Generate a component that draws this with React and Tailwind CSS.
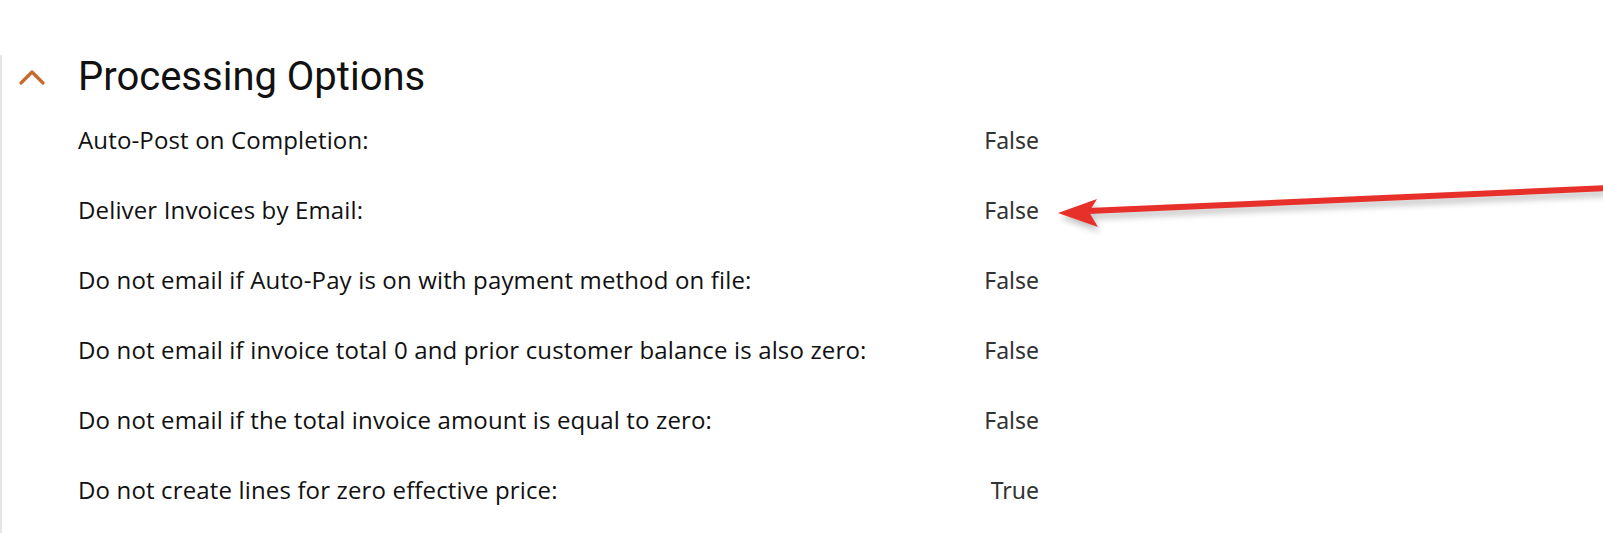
import React from 'react';

const rows = [
  { label: 'Auto-Post on Completion:', value: 'False' },
  { label: 'Deliver Invoices by Email:', value: 'False' },
  { label: 'Do not email if Auto-Pay is on with payment method on file:', value: 'False' },
  { label: 'Do not email if invoice total 0 and prior customer balance is also zero:', value: 'False' },
  { label: 'Do not email if the total invoice amount is equal to zero:', value: 'False' },
  { label: 'Do not create lines for zero effective price:', value: 'True' },
];

export default function App() {
  return (
    <div className="relative h-[533px] w-[1603px] overflow-hidden bg-white">
      <div className="h-full border-l-2 border-[#e6e6e6]">
        <div className="flex h-[44px] items-center pt-0 mt-[55px]">
          <svg width="28" height="18" viewBox="0 0 28 18" className="ml-[16px]">
            <path d="M3 15 L14 4 L25 15" fill="none" stroke="#c96a2b" strokeWidth="3.2" strokeLinecap="round" strokeLinejoin="round" />
          </svg>
          <h2 className="ml-[32px] text-[40px] leading-[44px] text-[#111] font-['Roboto',sans-serif]">
            Processing Options
          </h2>
        </div>
        <div className="mt-[6px] ml-[76px] w-[961px]">
          {rows.map(r => (
            <div key={r.label} className="flex h-[70px] items-center justify-between">
              <span className="text-[24px] font-medium tracking-[0.15px] text-[#111] font-['Open_Sans',sans-serif]">{r.label}</span>
              <span className="text-[23px] text-[#333] font-['Noto_Sans',sans-serif]">{r.value}</span>
            </div>
          ))}
        </div>
      </div>
      <svg className="absolute left-0 top-0 pointer-events-none" width="1603" height="533">
        <defs>
          <filter id="sh" x="-10%" y="-200%" width="120%" height="500%">
            <feGaussianBlur stdDeviation="3" />
          </filter>
        </defs>
        <g opacity="0.35" filter="url(#sh)" transform="translate(2,5)">
          <path d="M1610 188 L1088 211" stroke="#555" strokeWidth="6" fill="none" />
          <path d="M1058 213 L1097 199 L1089 212 L1098 227 Z" fill="#555" />
        </g>
        <path d="M1610 188 L1088 211" stroke="#e8302a" strokeWidth="6" fill="none" />
        <path d="M1058 213 L1097 199 L1089 212 L1098 227 Z" fill="#e8302a" />
      </svg>
    </div>
  );
}
